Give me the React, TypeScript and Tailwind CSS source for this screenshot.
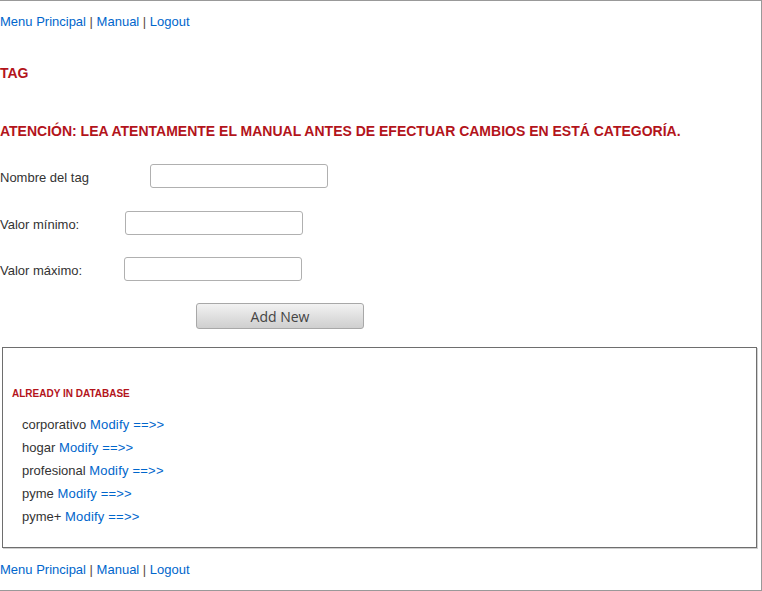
const items = ['corporativo', 'hogar', 'profesional', 'pyme', 'pyme+'];

function NavLinks() {
  return (
    <div className="leading-[16px]">
      <a href="#" className="text-[#0066cc]">Menu Principal</a>
      <span className="text-[#5a4a3a]"> | </span>
      <a href="#" className="text-[#0066cc]">Manual</a>
      <span className="text-[#5a4a3a]"> | </span>
      <a href="#" className="text-[#0066cc]">Logout</a>
    </div>
  );
}

export default function App() {
  return (
    <div className="w-[762px] h-[591px] bg-white border-t border-r border-b border-[#999] text-[13px] text-[#333] font-['Liberation_Sans',Arial,sans-serif] pt-[13px] box-border overflow-hidden">
      <NavLinks />

      <h1 className="mt-[35px] text-[14px] leading-[17px] font-bold text-[#b3141b]">TAG</h1>

      <h2 className="mt-[41px] text-[14px] leading-[17px] font-bold text-[#b3141b]">
        ATENCIÓN: LEA ATENTAMENTE EL MANUAL ANTES DE EFECTUAR CAMBIOS EN ESTÁ CATEGORÍA.
      </h2>

      {/* Formulario */}
      <div className="mt-[24px] flex flex-col gap-[22px]">
        <div className="flex items-center h-[24px]">
          <label className="w-[150px] pt-[4px]">Nombre del tag</label>
          <input type="text" className="w-[178px] h-[24px] border border-[#b0b0b0] rounded-[3px] bg-white" />
        </div>
        <div className="flex items-center h-[24px] mt-px">
          <label className="w-[125px] pt-[4px]">Valor mínimo:</label>
          <input type="text" className="w-[178px] h-[24px] border border-[#b0b0b0] rounded-[3px] bg-white" />
        </div>
        <div className="flex items-center h-[24px]">
          <label className="w-[124px] pt-[4px]">Valor máximo:</label>
          <input type="text" className="w-[178px] h-[24px] border border-[#b0b0b0] rounded-[3px] bg-white" />
        </div>
        <div className="pl-[196px]">
          <button className="w-[168px] h-[26px] pt-[2px] rounded-[3px] border border-[#a8a8a8] bg-gradient-to-b from-[#f2f2f2] to-[#cfcfcf] text-[#444] text-[14px] font-['Open_Sans',sans-serif] leading-none">
            Add New
          </button>
        </div>
      </div>

      {/* Ya en base de datos */}
      <div className="mt-[18px] ml-[2px] w-[755px] h-[201px] border border-[#6e6e6e] shadow-[1px_1px_0_#d0d0d0] box-border pt-[40px] pl-[9px]">
        <h3 className="text-[10px] leading-[12px] font-bold text-[#b3141b]">ALREADY IN DATABASE</h3>
        <ul className="mt-[13px] pl-[10px]">
          {items.map(name => (
            <li key={name} className="leading-[23px]">
              {name} <a href="#" className="text-[#0066cc] tracking-[0.2px]">Modify ==&gt;&gt;</a>
            </li>
          ))}
        </ul>
      </div>

      <div className="mt-[14px]">
        <NavLinks />
      </div>
    </div>
  );
}
